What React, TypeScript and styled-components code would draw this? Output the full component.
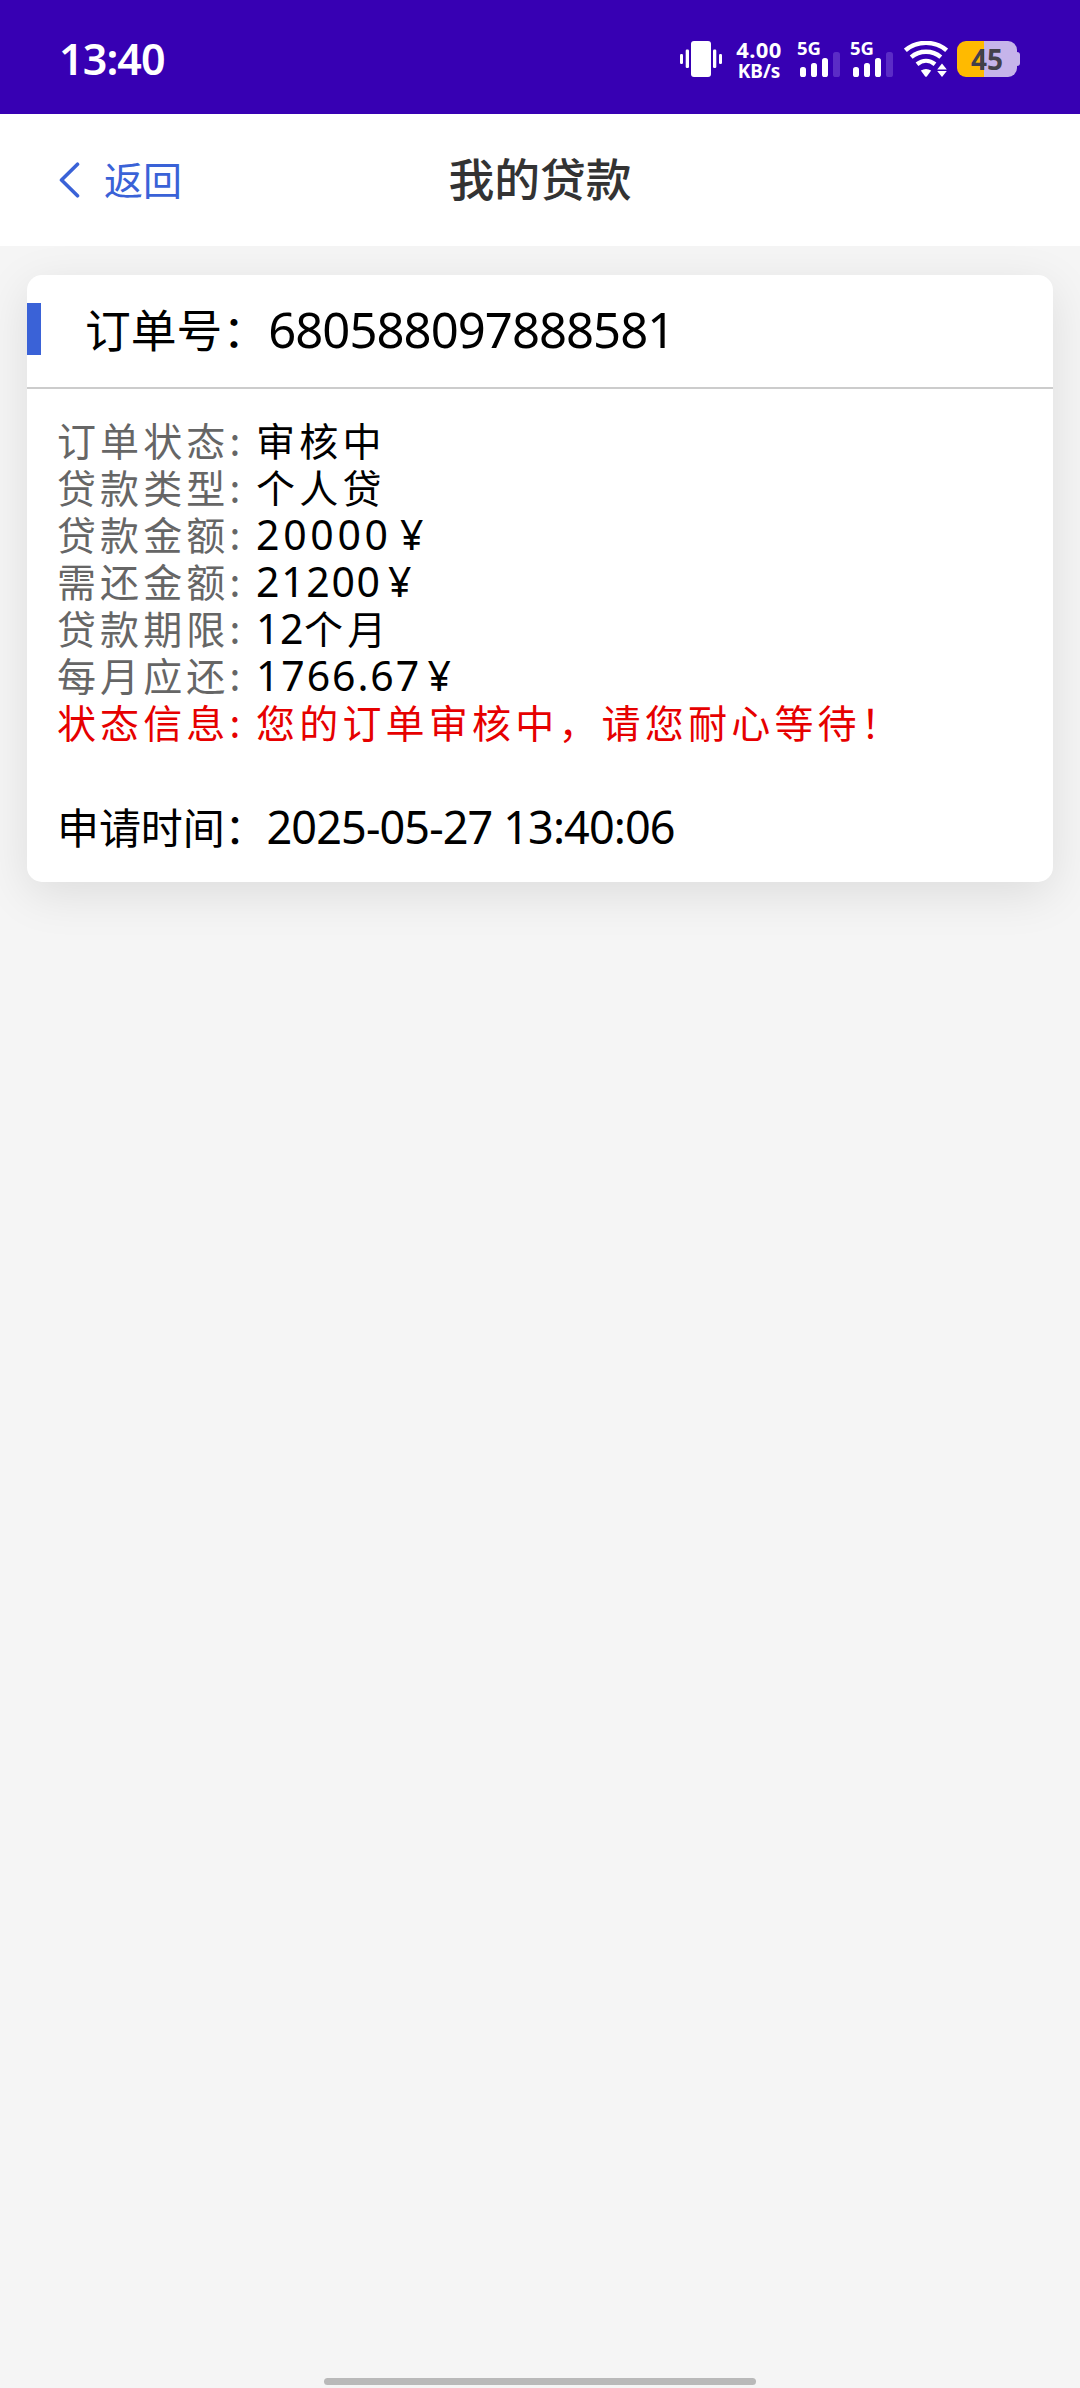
import React from "react";
import styled, { createGlobalStyle } from "styled-components";

const cjk = `"Noto Sans CJK SC", "Noto Sans", sans-serif`;
const latin = `"Noto Sans", "Noto Sans CJK SC", sans-serif`;

const GlobalStyle = createGlobalStyle`
  * { box-sizing: border-box; }
  body { margin: 0; background: #f5f5f5; }
`;

const Screen = styled.div`
  width: 1080px;
  height: 2388px;
  display: flex;
  flex-direction: column;
  background: #f5f5f5;
  font-family: ${cjk};
  color: #000;
  overflow: hidden;
`;

const StatusBar = styled.div`
  height: 114px;
  flex: none;
  display: flex;
  align-items: center;
  justify-content: space-between;
  padding: 4px 60px 0 59px;
  background: #3700b3;
  color: #fff;
  font-family: ${latin};
`;

const Clock = styled.div`
  font-size: 43px;
  font-weight: 600;
  line-height: 50px;
  letter-spacing: -0.9px;
`;

const StatusIcons = styled.div`
  display: flex;
  height: 36px;
  align-items: stretch;
`;

const Speed = styled.div`
  width: 48px;
  margin: 0 15px 0 13px;
  display: flex;
  flex-direction: column;
  align-items: center;
  font-weight: 700;
  white-space: nowrap;
`;

const SpeedValue = styled.span`
  font-size: 22px;
  line-height: 16px;
  height: 16px;
  letter-spacing: 0.4px;
`;

const SpeedUnit = styled.span`
  margin-top: 6px;
  font-size: 19px;
  line-height: 16px;
`;

const Signal = styled.div`
  width: 42px;
  height: 36px;
  margin-right: 11px;
  display: flex;
  flex-direction: column;
`;

const SignalLabel = styled.span`
  margin-left: -1px;
  font-size: 18.5px;
  font-weight: 700;
  line-height: 14px;
  height: 11px;
`;

const SignalBars = styled.div`
  display: flex;
  align-items: flex-end;
  gap: 4.8px;
  height: 25px;
  padding-left: 2px;
`;

const SignalBar = styled.i<{ $h: number; $dim?: boolean }>`
  width: 6.3px;
  flex: none;
  height: ${(p) => p.$h}px;
  border-radius: 2.6px;
  background: ${(p) => (p.$dim ? "#5b2cc6" : "#fff")};
`;

const Battery = styled.div`
  width: 60px;
  height: 36px;
  margin-left: 9px;
  border-radius: 9px;
  background: linear-gradient(90deg, #ffba00 27px, #c6b4ea 27px);
  color: #43404a;
  font-size: 28px;
  font-weight: 700;
  line-height: 36px;
  text-align: center;
`;

const BatteryTip = styled.div`
  width: 3px;
  height: 14px;
  align-self: center;
  border-radius: 0 3px 3px 0;
  background: #c6b4ea;
`;

const NavBar = styled.header`
  height: 132px;
  flex: none;
  display: grid;
  grid-template-columns: 1fr auto 1fr;
  align-items: center;
  padding: 0 56px;
  background: #fff;
`;

const Back = styled.div`
  display: flex;
  align-items: center;
  gap: 24px;
  color: #3a62d7;
  font-size: 39px;
`;

const BackText = styled.span`
  line-height: 60px;
  padding-bottom: 4px;
`;

const Title = styled.h1`
  margin: 0;
  padding-bottom: 6px;
  font-size: 45.8px;
  font-weight: 500;
  line-height: 60px;
  color: #333;
`;

const Card = styled.section`
  margin: 29px 27px 0;
  height: 607px;
  border-radius: 15px;
  background: #fff;
  box-shadow: 0 12px 48px rgba(0, 0, 0, 0.1);
`;

const CardHead = styled.div`
  height: 114px;
  display: flex;
  align-items: center;
  padding-bottom: 6px;
  border-bottom: 2px solid #ccc;
`;

const Accent = styled.div`
  width: 14px;
  height: 52px;
  margin-right: 44px;
  margin-top: 2px;
  background: #3a62d7;
`;

const Text = styled.span<{ $size: number; $gap?: number; $latin?: boolean }>`
  font-family: ${(p) => (p.$latin ? latin : cjk)};
  font-size: ${(p) => p.$size}px;
  letter-spacing: ${(p) => p.$gap ?? 0}px;
  white-space: pre;
`;

const OrderNumber = styled(Text)`
  padding-top: 2px;
`;

const Amount = styled(Text)`
  word-spacing: -6px;
`;

const Rows = styled.div`
  padding: 27px 30px 0;
`;

const Row = styled.div<{ $alert?: boolean }>`
  display: flex;
  align-items: baseline;
  height: 47px;
  line-height: 47px;
  color: ${(p) => (p.$alert ? "#e60000" : "#000")};
`;

const Label = styled.span<{ $alert?: boolean }>`
  width: 199px;
  flex: none;
  font-size: 39px;
  letter-spacing: 4.1px;
  color: ${(p) => (p.$alert ? "inherit" : "#666")};
`;

const Applied = styled.div`
  display: flex;
  align-items: baseline;
  padding: 51px 30px 0;
  line-height: 60px;
`;

const HomeBar = styled.div`
  width: 432px;
  height: 7px;
  margin: auto auto 3px;
  border-radius: 4px;
  background: #b9b9b9;
`;

type Part = { t: string; gap: number; latin?: boolean };

const rows: { label: string; parts: Part[]; alert?: boolean }[] = [
  { label: "订单状态:", parts: [{ t: "审核中", gap: 4.2 }] },
  { label: "贷款类型:", parts: [{ t: "个人贷", gap: 4.2 }] },
  { label: "贷款金额:", parts: [{ t: "20000 ¥", gap: 3.7, latin: true }] },
  { label: "需还金额:", parts: [{ t: "21200 ¥", gap: 1.7, latin: true }] },
  { label: "贷款期限:", parts: [{ t: "12", gap: 0.6, latin: true }, { t: "个月", gap: 4.2 }] },
  { label: "每月应还:", parts: [{ t: "1766.67 ¥", gap: 1.9, latin: true }] },
  { label: "状态信息:", parts: [{ t: "您的订单审核中，请您耐心等待！", gap: 4.2 }], alert: true },
];

function VibrateIcon() {
  return (
    <svg width="42" height="36" viewBox="0 0 42 36" fill="#fff">
      <rect x="11" y="0" width="20" height="36" rx="3" />
      <rect x="5.7" y="8.5" width="3.3" height="18.5" rx="1.2" />
      <rect x="0" y="13" width="3" height="10" rx="1.2" />
      <rect x="33" y="8.5" width="3.3" height="18.5" rx="1.2" />
      <rect x="39" y="13" width="3" height="10" rx="1.2" />
    </svg>
  );
}

function WifiIcon() {
  return (
    <svg width="44" height="36" viewBox="0 0 44 36" fill="none" stroke="#fff" strokeWidth="4.4">
      <path d="M1.4 9.3C13 -0.6 31 -0.6 42.6 9.3" />
      <path d="M7.2 16.2C15.5 9 28.5 9 36.8 16.2" />
      <path d="M13 23.2C18.5 18.8 25.5 18.8 31 23.2" />
      <path d="M16.8 29.6Q22 26.2 27.2 29.6L22.8 35.4Q22 36.3 21.2 35.4Z" fill="#fff" stroke="none" />
      <path d="M38 22.5L42.8 28.4H33.2Z M33.2 30H42.8L38 36Z" fill="#fff" stroke="none" />
    </svg>
  );
}

function CellSignal() {
  return (
    <Signal>
      <SignalLabel>5G</SignalLabel>
      <SignalBars>
        <SignalBar $h={10} />
        <SignalBar $h={14} />
        <SignalBar $h={19} />
        <SignalBar $h={25} $dim />
      </SignalBars>
    </Signal>
  );
}

export default function App() {
  return (
    <Screen>
      <GlobalStyle />
      <StatusBar>
        <Clock>13:40</Clock>
        <StatusIcons>
          <VibrateIcon />
          <Speed>
            <SpeedValue>4.00</SpeedValue>
            <SpeedUnit>KB/s</SpeedUnit>
          </Speed>
          <CellSignal />
          <CellSignal />
          <WifiIcon />
          <Battery>45</Battery>
          <BatteryTip />
        </StatusIcons>
      </StatusBar>
      <NavBar>
        <Back>
          <svg width="24" height="38" viewBox="0 0 24 38" fill="none" stroke="#3a62d7" strokeWidth="3.6" strokeLinecap="round" strokeLinejoin="round">
            <path d="M21.5 3.2L5.5 19L21.5 34.8" />
          </svg>
          <BackText>返回</BackText>
        </Back>
        <Title>我的贷款</Title>
      </NavBar>
      <Card>
        <CardHead>
          <Accent />
          <Text $size={45.8}>订单号：</Text>
          <OrderNumber $size={49} $gap={-0.95} $latin>680588097888581</OrderNumber>
        </CardHead>
        <Rows>
          {rows.map((r) => (
            <Row key={r.label} $alert={r.alert}>
              <Label $alert={r.alert}>{r.label}</Label>
              {r.parts.map((p) => (
                <Amount key={p.t} $size={p.latin ? 41 : 39} $gap={p.gap} $latin={p.latin}>
                  {p.t}
                </Amount>
              ))}
            </Row>
          ))}
        </Rows>
        <Applied>
          <Text $size={42} $gap={-0.1}>申请时间：</Text>
          <Text $size={45} $gap={-0.9} $latin>2025-05-27 13:40:06</Text>
        </Applied>
      </Card>
      <HomeBar />
    </Screen>
  );
}
